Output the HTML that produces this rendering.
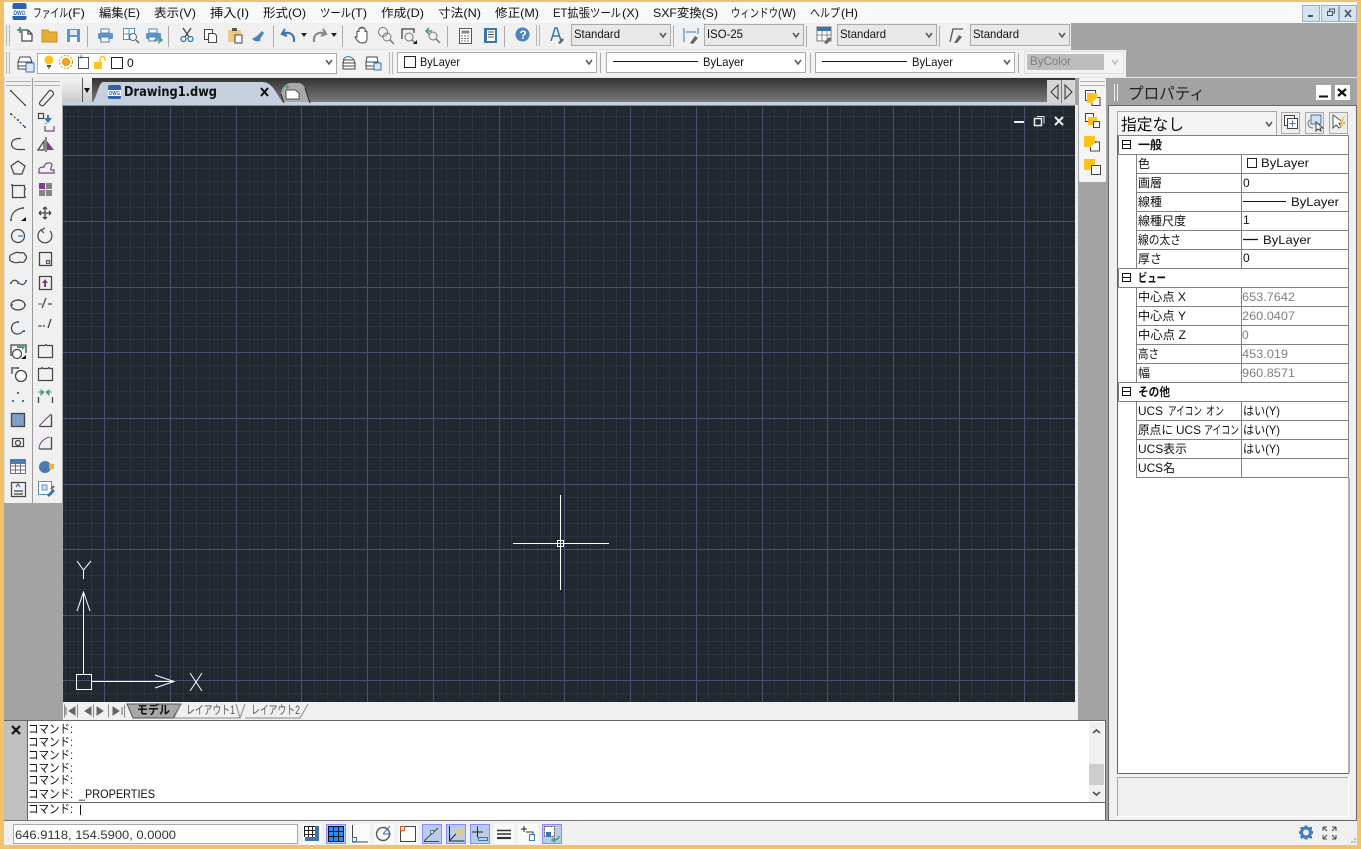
<!DOCTYPE html>
<html><head><meta charset="utf-8"><title>AutoCAD</title>
<style>
html,body{margin:0;padding:0;width:1361px;height:849px;overflow:hidden;background:#a3a3a3}
svg{display:block}
text{font-family:"Liberation Sans","Noto Sans CJK JP",sans-serif;font-size:12px;fill:#111;stroke:none}
.g{fill:#808080}
.b{font-weight:bold}
.i{fill:none;stroke:#444;stroke-width:1.2}
.c{fill:none;stroke:#555;stroke-width:1.5}
</style></head><body>
<svg xmlns="http://www.w3.org/2000/svg" width="1361" height="849" viewBox="0 0 1361 849">
<rect width="1361" height="849" fill="#a3a3a3"/>
<!-- menu bar -->
<rect x="4" y="2" width="1353" height="21" fill="#f6f8fa"/>
<rect x="12.500" y="3" width="14" height="17" rx="2" fill="#2d62ad"/><rect x="12.500" y="9" width="14" height="7" fill="#fff"/>
<text x="13.500" y="15" textLength="12" lengthAdjust="spacingAndGlyphs" style="font-size:6px;fill:#2d62ad;font-weight:bold">DWG</text>
<g>
<text x="33" y="17" textLength="35" lengthAdjust="spacingAndGlyphs">ファイル</text><text x="68" y="17" textLength="17" lengthAdjust="spacingAndGlyphs">(F)</text>
<text x="99" y="17" textLength="41" lengthAdjust="spacingAndGlyphs">編集(E)</text>
<text x="154" y="17" textLength="42" lengthAdjust="spacingAndGlyphs">表示(V)</text>
<text x="210" y="17" textLength="39" lengthAdjust="spacingAndGlyphs">挿入(I)</text>
<text x="263" y="17" textLength="43" lengthAdjust="spacingAndGlyphs">形式(O)</text>
<text x="320" y="17" textLength="31" lengthAdjust="spacingAndGlyphs">ツール</text><text x="351" y="17" textLength="16" lengthAdjust="spacingAndGlyphs">(T)</text>
<text x="381" y="17" textLength="43" lengthAdjust="spacingAndGlyphs">作成(D)</text>
<text x="438" y="17" textLength="43" lengthAdjust="spacingAndGlyphs">寸法(N)</text>
<text x="495" y="17" textLength="44" lengthAdjust="spacingAndGlyphs">修正(M)</text>
<text x="553" y="17" textLength="37" lengthAdjust="spacingAndGlyphs">ET拡張</text><text x="590" y="17" textLength="31" lengthAdjust="spacingAndGlyphs">ツール</text><text x="622" y="17" textLength="17" lengthAdjust="spacingAndGlyphs">(X)</text>
<text x="653" y="17" textLength="65" lengthAdjust="spacingAndGlyphs">SXF変換(S)</text>
<text x="731" y="17" textLength="47" lengthAdjust="spacingAndGlyphs">ウィンドウ</text><text x="778" y="17" textLength="18" lengthAdjust="spacingAndGlyphs">(W)</text>
<text x="810" y="17" textLength="30" lengthAdjust="spacingAndGlyphs">ヘルプ</text><text x="841" y="17" textLength="17" lengthAdjust="spacingAndGlyphs">(H)</text>
</g>
<g fill="#d5e3f0" stroke="#9ab0c4">
<rect x="1302.5" y="5.5" width="17" height="16"/><rect x="1321.5" y="5.5" width="17" height="16"/><rect x="1339.5" y="5.5" width="17" height="16"/>
</g>
<path d="M1308 16h5" stroke="#456" stroke-width="2"/>
<path d="M1327.5 11.5h5v4h-5zM1329.5 11v-2h5v4h-2" fill="none" stroke="#456"/>
<path d="M1345 10l6 7M1351 10l-6 7" stroke="#456" stroke-width="1.6"/>

<!-- toolbars -->
<rect x="4" y="23" width="1067" height="26" fill="#f0f0f0"/>
<rect x="4" y="50" width="1122" height="27" fill="#f2f2f2"/>
<rect x="4" y="49" width="1067" height="1" fill="#e2e2e2"/>
<rect x="4" y="77" width="1353" height="1" fill="#e8e8e8"/>
<path d="M6.5 25v21M9.5 25v21M6.5 52v22M9.5 52v22M536.5 25v21M539.5 25v21M389.5 52v22M392.5 52v22" stroke="#b5b5b5"/>
<path d="M87.5 26v21M168.5 26v21M273.5 26v21M342.5 26v21M447.5 26v21M504.5 26v21M673.5 26v21M806.5 26v21M939.5 26v21M600.5 53v20M810.5 53v20M1018.5 53v20" stroke="#aaa"/>

<!-- row 1 icons -->
<g class="i">
<path d="M22 30h6l4 4v7H22zM28 30v4h4" stroke-width="1.2" fill="#fff"/>
<path d="M20 27v6M17 30h6" stroke="#4f9a7f" stroke-width="2"/>
</g>
<path d="M42 30h6l1 2h8v10H42z" fill="#e6ac3a" stroke="#c98f20"/>
<rect x="67" y="29" width="13" height="13" fill="#5b93cc"/><rect x="70" y="30" width="7" height="5" fill="#dfe9f3"/><rect x="70" y="37" width="7" height="5" fill="#fff"/>
<g><rect x="101" y="29" width="8" height="4" fill="#fff" stroke="#4a82bd"/><rect x="98" y="33" width="15" height="6" rx="1" fill="#5b93cc"/><rect x="101" y="37" width="8" height="5" fill="#fff" stroke="#4a82bd"/></g>
<g fill="none" stroke="#5a90c8"><rect x="123.5" y="28.5" width="11" height="11" fill="#fff"/><path d="M129 28v11M123 34h11"/><circle cx="133" cy="37" r="3.5" stroke="#666" fill="#fff"/><path d="M136 40l3 3" stroke="#666" stroke-width="1.5"/></g>
<g><rect x="149" y="29" width="8" height="4" fill="#fff" stroke="#4a82bd"/><rect x="146" y="33" width="15" height="6" rx="1" fill="#5b93cc"/><rect x="149" y="37" width="7" height="4" fill="#fff" stroke="#4a82bd"/><path d="M154 40h7M158 37l4 3-4 3" fill="none" stroke="#4f9a7f" stroke-width="1.6"/></g>
<g fill="none" stroke="#444" stroke-width="1.3"><path d="M183 28l6 9M191 28l-6 9"/><circle cx="183.500" cy="39" r="2.500" stroke="#3a75b0"/><circle cx="190.500" cy="39" r="2.500" stroke="#3a75b0"/></g>
<g stroke="#444" fill="#fff"><rect x="204.500" y="29.500" width="8" height="10"/><path d="M208.500 33.500h6l2 2v7h-8z"/></g>
<g><rect x="228" y="30" width="13" height="12" fill="#eec883"/><rect x="232" y="28" width="5" height="3" fill="#555"/><rect x="235" y="35" width="7" height="8" fill="#fff" stroke="#444"/></g>
<path d="M252 39l5-3 4 4c-2 2-6 2-9-1zM257 36l5-5 2 2-4 6" fill="#4a82bd"/>
<path d="M285 29l-3 5 5 2M283 34c6-3 12 0 11 8" fill="none" stroke="#3a75b0" stroke-width="2.200"/>
<path d="M301 33h6l-3 4zM331 33h6l-3 4z" fill="#222"/>
<path d="M323 29l3 5-5 2M325 34c-6-3-12 0-11 8" fill="none" stroke="#8a8a8a" stroke-width="2.200"/>
<path d="M357 37v-5a1 1 0 0 1 2 0v-3a1 1 0 0 1 2 0v-1a1 1 0 0 1 2 0v1a1 1 0 0 1 2 0v3a1 1 0 0 1 2 0v7c0 3-2 4-5 4-4 0-5-3-7-6z" fill="#fff" stroke="#444"/>
<g fill="none" stroke="#777"><circle cx="383" cy="32" r="4.500"/><circle cx="387" cy="37" r="4" /><path d="M390 40l4 4" stroke-width="1.500"/></g>
<g fill="none"><path d="M402 39v-10h12v4" stroke="#444" stroke-width="1.300"/><circle cx="409" cy="37" r="4" stroke="#777"/><path d="M412 40l3 3" stroke="#777" stroke-width="1.500"/><path d="M413 44l4-4v4z" fill="#111"/></g>
<g fill="none"><path d="M426 31h6M429 28l-3 3 3 3" stroke="#4f9a7f" stroke-width="1.600"/><circle cx="433" cy="36" r="4" stroke="#777"/><path d="M436 39l4 4" stroke="#777" stroke-width="1.500"/></g>
<rect x="459.500" y="28.500" width="12" height="15" fill="#fff" stroke="#555"/><rect x="461.500" y="30.500" width="8" height="3" fill="#888"/><path d="M461 36h9M461 38.500h9M461 41h9" stroke="#777" stroke-dasharray="2 1"/>
<rect x="484" y="28" width="13" height="15" fill="#3a75b0"/><rect x="487" y="30" width="8" height="11" fill="#fff"/><path d="M488 32h6M488 34.500h6M488 37h6" stroke="#555"/>
<circle cx="522.500" cy="34.500" r="7" fill="#4a82bd"/><text x="519.500" y="39" class="b" style="fill:#fff">?</text>
<!-- row 1 combos -->
<g fill="#e8e8e8" stroke="#aaa">
<rect x="571.500" y="24.500" width="99" height="21"/><rect x="704.500" y="24.500" width="99" height="21"/><rect x="837.500" y="24.500" width="99" height="21"/><rect x="970.500" y="24.500" width="99" height="21"/>
</g>
<text x="574" y="38" textLength="46" lengthAdjust="spacingAndGlyphs">Standard</text>
<text x="707" y="38" textLength="36" lengthAdjust="spacingAndGlyphs">ISO-25</text>
<text x="840" y="38" textLength="46" lengthAdjust="spacingAndGlyphs">Standard</text>
<text x="973" y="38" textLength="46" lengthAdjust="spacingAndGlyphs">Standard</text>
<path class="c" d="M660 33l3 4 3-4M793 33l3 4 3-4M926 33l3 4 3-4M1059 33l3 4 3-4"/>
<path d="M551 41l4-13h2l4 13M553 36h6" fill="none" stroke="#3a75b0" stroke-width="1.500"/><path d="M558 43l4-5 2 2-4 4z" fill="#666"/>
<path d="M684 28v14M698 28v6M686 32h10" fill="none" stroke="#3a75b0"/><path d="M690 43l5-7 3 2-5 6z" fill="#666"/>
<rect x="817" y="27" width="14" height="14" fill="#fff" stroke="#777"/><rect x="817" y="27" width="14" height="4" fill="#3a75b0"/><path d="M817 35h14M822 31v10M827 31v10" stroke="#888"/><path d="M824 43l5-6 2 2-4 5z" fill="#666"/>
<path d="M950 42l3-13h10" fill="none" stroke="#555" stroke-width="1.300"/><path d="M954 43l5-8 3 2-5 6z" fill="#666"/>

<!-- row 2 icons -->
<g fill="#fff" stroke="#444"><path d="M18 62l2-5h10l2 5zM18 62h13v4H18zM18 66h13v3H18z"/></g><rect x="26" y="63" width="8" height="9" fill="#dfe9f3" stroke="#3a75b0"/>
<rect x="37.500" y="53.500" width="299" height="20" fill="#fff" stroke="#aaa"/>
<circle cx="49" cy="60" r="4.500" fill="#fdc31a"/><path d="M47 65h4v2h-4z" fill="#555"/><path d="M48 68h2" stroke="#333"/>
<circle cx="66" cy="62" r="3.500" fill="#f5a623" stroke="#f08a00"/><circle cx="66" cy="62" r="6.500" fill="none" stroke="#f08a00" stroke-dasharray="2 1.500"/>
<rect x="78.500" y="57.500" width="10" height="11" fill="#fff" stroke="#555"/><path d="M81 54v5M78 56h6" stroke="#888" stroke-dasharray="1 1"/>
<rect x="94" y="62" width="8" height="7" fill="#fdc31a"/><path d="M100 62v-3a2.500 2.500 0 0 1 5 0v2" fill="none" stroke="#fdc31a" stroke-width="1.500"/>
<rect x="111.500" y="57.500" width="11" height="11" fill="#fff" stroke="#222"/>
<text x="127" y="67" style="font-size:12px">0</text>
<path class="c" d="M326 60l3 4 3-4"/>
<g fill="#fff" stroke="#444"><path d="M343 63h12l-1-3H344zM343 63h12v3H343zM343 66h12v3H343z"/></g><path d="M343 60c2-4 8-5 11 0" fill="none" stroke="#3a75b0"/>
<g fill="#fff" stroke="#444"><path d="M366 62l1-5h10l1 5zM366 62h12v4H366zM366 66h12v3H366z"/></g><rect x="374" y="63" width="7" height="7" fill="#dfe9f3" stroke="#3a75b0"/>
<g fill="#fff" stroke="#aaa">
<rect x="397.500" y="52.500" width="199" height="20"/><rect x="606.500" y="52.500" width="199" height="20"/><rect x="815.500" y="52.500" width="199" height="20"/>
</g>
<rect x="404.500" y="56.500" width="11" height="11" fill="#fff" stroke="#222"/>
<text x="420" y="66" textLength="40" lengthAdjust="spacingAndGlyphs">ByLayer</text>
<path d="M613 61.500h85M822 61.500h85" stroke="#111"/>
<text x="703" y="66" textLength="41" lengthAdjust="spacingAndGlyphs">ByLayer</text>
<text x="912" y="66" textLength="41" lengthAdjust="spacingAndGlyphs">ByLayer</text>
<path class="c" d="M586 60l3 4 3-4M795 60l3 4 3-4M1004 60l3 4 3-4"/>
<rect x="1024.500" y="51.500" width="99" height="22" fill="#f4f4f4" stroke="#ddd"/>
<rect x="1027" y="54" width="77" height="16" fill="#bdbdbd"/>
<text x="1030" y="65" textLength="41" lengthAdjust="spacingAndGlyphs" style="fill:#7d7d7d">ByColor</text>
<path d="M1112 60l3 4 3-4" fill="none" stroke="#bbb" stroke-width="1.500"/>

<!-- left tool columns -->
<rect x="5" y="78" width="27" height="425" fill="#f0f0f0"/>
<rect x="33" y="78" width="29" height="425" fill="#f0f0f0"/>
<rect x="32" y="78" width="1" height="425" fill="#9a9a9a"/>
<rect x="4" y="78" width="1" height="425" fill="#ddd"/>
<path d="M6 81.500h25M6 85.500h25M34 81.500h26M34 85.500h26" stroke="#b0b0b0"/>
<rect x="4" y="503" width="58" height="217" fill="#a3a3a3"/>

<!-- col 1 -->
<g fill="none" stroke="#444" stroke-width="1.200">
<path d="M11 91l14 14"/><path d="M11 114l14 13" stroke="#444" stroke-dasharray="2 2"/>
<path d="M25 149.500h-6c-10 0-10-11 0-11h2" stroke-dasharray="none"/>
<path d="M18 161l7 5-3 8h-8l-3-8z"/>
<path d="M12.500 185.500h12v12h-12z"/>
<path d="M11 220c0-7 5-11 12-12"/>
<circle cx="18" cy="236" r="6.500"/><path d="M18 236h5" stroke="#3a75b0"/>
<path d="M13 254c2-2 5-2 7-1 3-1 5 0 5 2 2 1 2 4 0 5 0 2-3 3-5 2-3 1-5 1-7 0-3-1-4-2-3-4-1-2 1-4 3-4z"/>
<path d="M11 283c3-5 6-2 8 0s5 3 7-2"/>
<ellipse cx="18" cy="305" rx="7" ry="5"/>
<path d="M18 322c-8 0-9 11-1 12 3 0 5-1 6-3"/>
<path d="M11 356v-11h15v8" stroke-width="1.300"/><circle cx="17" cy="354" r="4.500" fill="#fff"/>
<path d="M12 374v-6h6" stroke-width="1.300"/><circle cx="21" cy="376" r="5.500" fill="#fff" stroke-width="1.300"/>
<rect x="11.500" y="413.500" width="13" height="13" stroke-width="1.300" fill="#7f9fc6"/>
<rect x="12.500" y="438.500" width="11" height="8"/><circle cx="18" cy="443" r="2.500"/>
<path d="M11.500 482.500h14v14h-14z"/><path d="M14 491h9M14 494h9"/><path d="M16 487l2-3 2 3" stroke="#3a75b0"/>
</g>
<g fill="#3a75b0">
<rect x="10" y="90" width="2" height="2"/><rect x="24" y="104" width="2" height="2"/>
<rect x="10" y="113" width="2" height="2"/><rect x="17" y="119" width="2" height="2"/><rect x="24" y="126" width="2" height="2"/>
<rect x="24" y="188" width="2" height="2"/><rect x="11" y="184" width="2" height="2"/><rect x="24" y="196" width="2" height="2"/>
<rect x="22" y="207" width="2" height="2"/><rect x="10" y="219" width="2" height="2"/>
<rect x="10" y="282" width="2" height="2"/><rect x="17" y="282" width="2" height="2"/><rect x="25" y="280" width="2" height="2"/>
<rect x="11" y="304" width="2" height="2"/><rect x="17" y="299" width="2" height="2"/><rect x="24" y="304" width="2" height="2"/>
<rect x="17" y="321" width="2" height="2"/><rect x="23" y="330" width="2" height="2"/>
<rect x="11" y="367" width="2" height="2"/><rect x="17" y="367" width="2" height="2"/>
<rect x="17" y="392" width="2" height="2"/><rect x="12" y="400" width="2" height="2"/><rect x="22" y="400" width="2" height="2"/>
<path d="M17 346h5v-2l3 3-3 3v-2h-5z" fill="#4f9a7f"/>
</g>
<path d="M21 221l5-4v4zM21 359l5-4v4z" fill="#111"/>
<path d="M10.500 459.500h15v14h-15zM10 466h16M10 470h16M15.500 459v14M20.500 459v14" fill="#fff" stroke="#7b6a85"/>
<rect x="10" y="459" width="16" height="5" fill="#4a7bb0"/>

<!-- col 2 -->
<g fill="none" stroke="#444" stroke-width="1.200">
<path d="M40 102l9-11c2-2 6 2 4 4l-9 10c-2 2-6-1-4-3z"/>
<path d="M46 124v-1M46 131h-1v-5M46 131h8v-5" stroke="#7b3f87"/>
<rect x="38.500" y="113.500" width="5" height="5"/>
<path d="M46 137v15M38 150l6-9v9z"/>
<path d="M39 170c0-3 3-3 5-3 0-4 7-6 8-2 0 2-2 3-1 5h3v3H39z" stroke="#7b3f87"/>
<path d="M45 207v12M39 213h12M45 207l-2 2M45 207l2 2M45 219l-2-2M45 219l2-2M39 213l2-2M39 213l2 2M51 213l-2-2M51 213l-2 2" stroke-width="1.300"/>
<path d="M41 230a7 7 0 1 0 9 1" stroke-width="1.200"/><path d="M45 228l-4 2 3 3" stroke-width="1.200"/>
<path d="M39.500 252.500h12v13h-12z" stroke-width="1.300"/><rect x="46.500" y="260.500" width="3" height="3" stroke="#7b3f87"/>
<path d="M39.500 276.500h12v13h-12z" stroke-width="1.300"/>
<path d="M42 308l4-10" stroke-width="1.300"/><path d="M48 304h4"/>
<path d="M48 328l3-9" stroke-width="1.300"/><path d="M38 326h3M43 326h2"/>
<path d="M38.500 345.500h14v12h-14z"/>
<path d="M38.500 368.500h14v12h-14z"/>
<path d="M38.500 403v-6M52.500 403v-6" stroke-width="1.300"/>
<path d="M39.500 426.500h12v-12" stroke-width="1.300"/>
<path d="M51.500 437v12h-12" stroke-width="1.300"/>
</g>
<path d="M49 113v5h3l-4 5-4-5h3v-3h2z" fill="#3a75b0"/><path d="M46 142l7 9h-7z" fill="#7b3f87" transform="translate(1 -1)"/>
<g fill="#7b3f87"><rect x="39" y="183" width="6" height="6"/></g><g fill="#8b7f8c"><rect x="46" y="183" width="6" height="6"/><rect x="39" y="190" width="6" height="6"/><rect x="46" y="190" width="6" height="6"/></g>
<path d="M45 279l3 4h-2v4h-2v-4h-2z" fill="#7b3f87"/>
<path d="M38 304h4" stroke="#7b3f87"/><path d="M38 326h4" stroke="#7b3f87" stroke-dasharray="2 1"/>
<rect x="45" y="344" width="2" height="2" fill="#3a75b0"/><rect x="41" y="367" width="2" height="2" fill="#3a75b0"/><rect x="48" y="367" width="2" height="2" fill="#3a75b0"/>
<path d="M38 392h6M44 392l-3-2v5zM52 392h-6M46 392l3-2v5z" fill="#4f9a7f" stroke="#4f9a7f"/>
<path d="M39 426l12-12M39 449c0-6 5-11 11-12" fill="none" stroke="#7b3f87"/>
<circle cx="45" cy="467" r="6" fill="#4a7bb0"/><rect x="49" y="464" width="5" height="5" fill="#f0b040"/>
<g fill="#fff" stroke="#5a90c8"><rect x="38.500" y="481.500" width="13" height="13"/><rect x="42" y="485" width="5" height="5" fill="#cfe0f0"/></g><path d="M47 495l6-6 2 2-6 6z" fill="#3a75b0"/><path d="M51 489l3-3" stroke="#666" stroke-width="2"/>

<!-- tab bar -->
<defs>
<linearGradient id="tb" x1="0" y1="0" x2="0" y2="1"><stop offset="0" stop-color="#333"/><stop offset="1" stop-color="#7d7d7d"/></linearGradient>
<linearGradient id="bt" x1="0" y1="0" x2="0" y2="1"><stop offset="0" stop-color="#f4f4f4"/><stop offset="1" stop-color="#c9c9c9"/></linearGradient>
</defs>
<rect x="62" y="78" width="1013" height="25" fill="url(#tb)"/>
<rect x="62" y="78" width="30" height="25" fill="url(#bt)"/>
<path d="M82.500 78v25" stroke="#555"/>
<path d="M84 88h6l-3 5z" fill="#111"/>
<path d="M92 103c3-2 5-12 8-18 1-2 2-3 4-3h158c5 0 8 2 12 7l9 14z" fill="#c5d0dc"/>
<rect x="62" y="102" width="1013" height="3" fill="#c5d0dc"/>
<rect x="62" y="105" width="1016" height="1" fill="#8c8c8c"/>
<rect x="108" y="85" width="13" height="14" rx="2" fill="#2d62ad"/><rect x="108" y="90" width="13" height="6" fill="#fff"/>
<text x="109" y="95" textLength="11" lengthAdjust="spacingAndGlyphs" style="font-size:5.500px;fill:#2d62ad;font-weight:bold">DWG</text>
<text x="124" y="96" class="b" textLength="93" lengthAdjust="spacingAndGlyphs" style="font-size:13px;font-family:'DejaVu Sans',sans-serif">Drawing1.dwg</text>
<path d="M261 88l7 8M268 88l-7 8" stroke="#111" stroke-width="2"/>
<path d="M284 102l-3-8c1-6 4-11 10-11h7c4 0 5 2 7 5l5 14z" fill="#a8a8a8"/>
<path d="M281 94l3 9M305 88l5 15" fill="none" stroke="#222"/>
<path d="M286 90h9l4 3v6h-13z" fill="#fff" stroke="#555"/><path d="M287 84v5M284.500 87h5" stroke="#4f9a7f" stroke-width="1.500"/>
<rect x="1047" y="80" width="28" height="23" fill="#d6d6d6"/><path d="M1061.500 80v23" stroke="#777"/>
<path d="M1058 85v14l-7-7zM1065 85v14l7-7z" fill="none" stroke="#333"/>

<!-- drawing area -->
<rect x="62" y="106" width="1" height="596" fill="#a8a8a8"/>
<rect x="63" y="106" width="1012" height="596" fill="#212830"/>
<path stroke="#2d3340" stroke-width="1" fill="none" d="M65.500 107V702M78.500 107V702M91.500 107V702M117.500 107V702M130.500 107V702M144.500 107V702M157.500 107V702M183.500 107V702M196.500 107V702M209.500 107V702M222.500 107V702M249.500 107V702M262.500 107V702M275.500 107V702M288.500 107V702M314.500 107V702M327.500 107V702M340.500 107V702M354.500 107V702M380.500 107V702M393.500 107V702M406.500 107V702M419.500 107V702M446.500 107V702M459.500 107V702M472.500 107V702M485.500 107V702M511.500 107V702M524.500 107V702M537.500 107V702M551.500 107V702M577.500 107V702M590.500 107V702M603.500 107V702M616.500 107V702M643.500 107V702M656.500 107V702M669.500 107V702M682.500 107V702M708.500 107V702M721.500 107V702M735.500 107V702M748.500 107V702M774.500 107V702M787.500 107V702M800.500 107V702M813.500 107V702M840.500 107V702M853.500 107V702M866.500 107V702M879.500 107V702M905.500 107V702M919.500 107V702M932.500 107V702M945.500 107V702M971.500 107V702M984.500 107V702M997.500 107V702M1011.500 107V702M1037.500 107V702M1050.500 107V702M1063.500 107V702"/>
<path stroke="#2d3340" stroke-width="1" fill="none" d="M63 116.500H1075M63 129.500H1075M63 142.500H1075M63 168.500H1075M63 181.500H1075M63 194.500H1075M63 207.500H1075M63 234.500H1075M63 247.500H1075M63 260.500H1075M63 273.500H1075M63 300.500H1075M63 313.500H1075M63 326.500H1075M63 339.500H1075M63 365.500H1075M63 378.500H1075M63 391.500H1075M63 405.500H1075M63 431.500H1075M63 444.500H1075M63 457.500H1075M63 470.500H1075M63 497.500H1075M63 510.500H1075M63 523.500H1075M63 536.500H1075M63 562.500H1075M63 575.500H1075M63 589.500H1075M63 602.500H1075M63 628.500H1075M63 641.500H1075M63 654.500H1075M63 667.500H1075M63 693.500H1075"/>
<path stroke="#4b4f6f" stroke-width="1" fill="none" d="M104.500 107V702M170.500 107V702M236.500 107V702M301.500 107V702M367.500 107V702M433.500 107V702M499.500 107V702M564.500 107V702M630.500 107V702M696.500 107V702M762.500 107V702M827.500 107V702M893.500 107V702M959.500 107V702M1024.500 107V702M63 155.500H1075M63 221.500H1075M63 287.500H1075M63 352.500H1075M63 418.500H1075M63 484.500H1075M63 549.500H1075M63 615.500H1075M63 680.500H1075"/>
<!-- viewport controls -->
<path d="M1014 122h10" stroke="#eee" stroke-width="2"/>
<path d="M1034.500 118.500h7v7h-7z" fill="#212830" stroke="#eee" stroke-width="1.500"/><path d="M1037 116.500h7v7" fill="none" stroke="#ddd"/>
<path d="M1055 117l8 8M1063 117l-8 8" stroke="#eee" stroke-width="2"/>
<!-- crosshair -->
<path d="M513 543.500h96M560.500 495v95" stroke="#fff"/>
<rect x="557.500" y="540.500" width="6" height="6" fill="none" stroke="#fff"/>
<!-- UCS -->
<g fill="none" stroke="#fff" stroke-width="1">
<path d="M83.500 674V593M77 611l6.500-19 6.500 19"/>
<path d="M77 561l6.500 9 7.500-9M83.500 570v9"/>
<rect x="76.500" y="674.500" width="15" height="15"/>
<path d="M92 681.500h82M155 675l19 6.500-19 6.500"/>
<path d="M190 673l12 18M202 673l-12 18"/>
</g>

<!-- layout tabs -->
<rect x="63" y="702" width="1015" height="18" fill="#f0f0f0"/>
<rect x="1075" y="105" width="3" height="597" fill="#ececec"/>
<g stroke="#888" fill="#e6e6e6"><path d="M64.500 704.500v13M77.500 704.500v13M93.500 704.500v13M108.500 704.500v13M124.500 704.500v13" fill="none"/></g>
<path d="M66 707v8M75 707l-6 4 6 4zM91 707l-6 4 6 4zM97 707l6 4-6 4zM113 707l6 4-6 4zM122 707v8" fill="#666" stroke="#666"/>
<path d="M127 704h54l-8 14h-40z" fill="#a8a8a8" stroke="#555"/>
<text x="137" y="714" class="b" textLength="33" lengthAdjust="spacingAndGlyphs">モデル</text>
<path d="M181 704l-7 14h66l-4-14M240 718l5-14M245 718h55l8-14" fill="none" stroke="#888"/>
<text x="186" y="714" textLength="49" lengthAdjust="spacingAndGlyphs" style="fill:#555">レイアウト1</text>
<text x="251" y="714" textLength="49" lengthAdjust="spacingAndGlyphs" style="fill:#555">レイアウト2</text>

<!-- command area -->
<rect x="4" y="720" width="1102" height="101" fill="#fff"/>
<rect x="4" y="721" width="23" height="100" fill="#c0c0c0"/>
<path d="M12 726l8 8M20 726l-8 8" stroke="#111" stroke-width="2.200"/>
<rect x="1089" y="722" width="15" height="80" fill="#f0f0f0"/>
<rect x="1089" y="764" width="15" height="21" fill="#cdcdcd"/>
<path d="M1093 733l3.500-3 3.500 3M1093 792l3.500 3 3.500-3" fill="none" stroke="#555" stroke-width="1.800"/>
<path d="M4 720.500H1105.500V820.500H4M27.500 721V820M28 802.500H1105" fill="none" stroke="#666"/>
<g style="font-size:12px">
<text x="28" y="733" textLength="45" lengthAdjust="spacingAndGlyphs">コマンド:</text>
<text x="28" y="746" textLength="45" lengthAdjust="spacingAndGlyphs">コマンド:</text>
<text x="28" y="759" textLength="45" lengthAdjust="spacingAndGlyphs">コマンド:</text>
<text x="28" y="772" textLength="45" lengthAdjust="spacingAndGlyphs">コマンド:</text>
<text x="28" y="784" textLength="45" lengthAdjust="spacingAndGlyphs">コマンド:</text>
<text x="28" y="798" textLength="45" lengthAdjust="spacingAndGlyphs">コマンド:</text>
<text x="79" y="798" textLength="76" lengthAdjust="spacingAndGlyphs">_PROPERTIES</text>
<text x="28" y="813" textLength="45" lengthAdjust="spacingAndGlyphs">コマンド:</text>
</g>
<path d="M80.500 805v10" stroke="#111"/>

<!-- right narrow toolbar -->
<rect x="1079" y="78" width="27" height="104" rx="2" fill="#f4f4f4"/>
<path d="M1080 81.500h25M1080 85.500h25" stroke="#b0b0b0"/>
<g>
<rect x="1085.500" y="90.500" width="10" height="10" fill="#fff" stroke="#444"/><rect x="1087" y="93" width="10" height="10" fill="#fdc31a"/><path d="M1097.500 97.500h2.500v8h-8v-2.500" fill="#fff" stroke="#444"/>
<rect x="1085.500" y="113.500" width="8" height="8" fill="#fff" stroke="#444"/><rect x="1088" y="117" width="9" height="8" fill="#fdc31a"/><rect x="1093.500" y="121.500" width="6" height="6" fill="#fff" stroke="#444"/>
<rect x="1084" y="136" width="11" height="11" fill="#fdc31a"/><path d="M1095.500 143v-1h4v9h-9v-4" fill="#fff" stroke="#444"/>
<rect x="1084" y="159" width="11" height="11" fill="#fdc31a"/><rect x="1091.500" y="165.500" width="9" height="9" fill="#fff" stroke="#444"/>
</g>

<!-- properties palette -->
<rect x="1108.500" y="105.500" width="248" height="715" fill="#f0f0f0" stroke="#666"/>
<path d="M1108 105V86c0-3 2-5 5-5h239c3 0 5 2 5 5v19z" fill="#a3a3a3"/>
<path d="M1114.500 84v17M1117.500 84v17" stroke="#f0f0f0"/>
<text x="1128" y="99" textLength="77" lengthAdjust="spacingAndGlyphs" style="font-size:16px;fill:#222">プロパティ</text>
<rect x="1316" y="85" width="15" height="15" fill="#fff"/><path d="M1319 96.500h9" stroke="#111" stroke-width="2"/>
<rect x="1335" y="85" width="15" height="15" fill="#fff"/><path d="M1338 89l8 7M1346 89l-8 7" stroke="#111" stroke-width="2.200"/>
<rect x="1117.500" y="111.500" width="159" height="24" fill="#f4f4f4" stroke="#a8a8a8"/>
<text x="1121" y="130" textLength="63" lengthAdjust="spacingAndGlyphs" style="font-size:16px">指定なし</text>
<path class="c" d="M1266 122l3 4 3-4"/>
<g fill="#eee" stroke="#aaa"><rect x="1281.500" y="112.500" width="18" height="21"/><rect x="1305.500" y="112.500" width="18" height="21"/><rect x="1329.500" y="112.500" width="18" height="21"/></g>
<g fill="#fff" stroke="#444"><rect x="1284.500" y="115.500" width="10" height="10"/><rect x="1287.500" y="118.500" width="10" height="10"/></g><path d="M1292.500 120.500v6M1289.500 123.500h6" stroke="#3a75b0"/>
<rect x="1311" y="115" width="10" height="9" fill="#cfe0f0" stroke="#3a75b0"/><path d="M1310 120c-3 1-3 8 3 8" fill="none" stroke="#777"/><path d="M1316 122l0 9 2-2 3 2-1-3h3z" fill="#fff" stroke="#444"/>
<path d="M1333 115l0 13 3-3 3 3 2-1-2-4h5z" fill="#fff" stroke="#555"/><path d="M1344 116l-5 7h3l-3 6 7-8h-3l2-5z" fill="#f5c66a"/>

<!-- table -->
<rect x="1118" y="135" width="231" height="638" fill="#fff"/>
<path fill="none" stroke="#808080" d="M1118.500 135.500H1348.500V477.500H1136.500M1118.500 135.500V154.500M1118.500 154.500H1348.500M1136.500 173.500H1348.500M1136.500 192.500H1348.500M1136.500 211.500H1348.500M1136.500 230.500H1348.500M1136.500 249.500H1348.500M1118.500 268.500H1348.500M1118.500 287.500H1348.500M1136.500 306.500H1348.500M1136.500 325.500H1348.500M1136.500 344.500H1348.500M1136.500 363.500H1348.500M1118.500 382.500H1348.500M1118.500 401.500H1348.500M1136.500 420.500H1348.500M1136.500 439.500H1348.500M1136.500 458.500H1348.500M1118.500 268.500V287.500M1118.500 382.500V401.500M1136.500 154.500V268.500M1136.500 287.500V382.500M1136.500 401.500V477.500M1241.500 154.500V268.500M1241.500 287.500V382.500M1241.500 401.500V477.500"/>
<path fill="none" stroke="#111" d="M1122.500 140.500h8v8h-8zM1122.500 144.500h8M1122.500 273.500h8v8h-8zM1122.500 277.500h8M1122.500 387.500h8v8h-8zM1122.500 391.500h8"/>
<text x="1138" y="149" class="b" textLength="24" lengthAdjust="spacingAndGlyphs">一般</text>
<text x="1138" y="282" class="b" textLength="28" lengthAdjust="spacingAndGlyphs">ビュー</text>
<text x="1138" y="396" class="b" textLength="32" lengthAdjust="spacingAndGlyphs">その他</text>
<text x="1138" y="168" textLength="12" lengthAdjust="spacingAndGlyphs">色</text>
<text x="1138" y="187" textLength="24" lengthAdjust="spacingAndGlyphs">画層</text>
<text x="1138" y="206" textLength="24" lengthAdjust="spacingAndGlyphs">線種</text>
<text x="1138" y="225" textLength="48" lengthAdjust="spacingAndGlyphs">線種尺度</text>
<text x="1138" y="244" textLength="43" lengthAdjust="spacingAndGlyphs">線の太さ</text>
<text x="1138" y="263" textLength="24" lengthAdjust="spacingAndGlyphs">厚さ</text>
<text x="1138" y="301" textLength="48" lengthAdjust="spacingAndGlyphs">中心点 X</text>
<text x="1138" y="320" textLength="48" lengthAdjust="spacingAndGlyphs">中心点 Y</text>
<text x="1138" y="339" textLength="48" lengthAdjust="spacingAndGlyphs">中心点 Z</text>
<text x="1138" y="358" textLength="21" lengthAdjust="spacingAndGlyphs">高さ</text>
<text x="1138" y="377" textLength="12" lengthAdjust="spacingAndGlyphs">幅</text>
<text x="1138" y="415" textLength="25" lengthAdjust="spacingAndGlyphs">UCS</text><text x="1168" y="415" textLength="34" lengthAdjust="spacingAndGlyphs">アイコン</text><text x="1206" y="415" textLength="18" lengthAdjust="spacingAndGlyphs">オン</text>
<text x="1138" y="434" textLength="35" lengthAdjust="spacingAndGlyphs">原点に</text><text x="1176" y="434" textLength="25" lengthAdjust="spacingAndGlyphs">UCS</text><text x="1204" y="434" textLength="35" lengthAdjust="spacingAndGlyphs">アイコン</text>
<text x="1138" y="453" textLength="49" lengthAdjust="spacingAndGlyphs">UCS表示</text>
<text x="1138" y="472" textLength="37" lengthAdjust="spacingAndGlyphs">UCS名</text>
<rect x="1247.500" y="158.500" width="9" height="9" fill="#fff" stroke="#222"/>
<text x="1261" y="167" textLength="48" lengthAdjust="spacingAndGlyphs">ByLayer</text>
<text x="1243" y="187">0</text>
<path d="M1243 201.500h43" stroke="#111"/><text x="1291" y="206" textLength="48" lengthAdjust="spacingAndGlyphs">ByLayer</text>
<text x="1243" y="224">1</text>
<path d="M1243 239.500h15" stroke="#111" stroke-width="1.300"/><text x="1263" y="244" textLength="48" lengthAdjust="spacingAndGlyphs">ByLayer</text>
<text x="1243" y="262">0</text>
<text x="1242" y="301" class="g" textLength="53" lengthAdjust="spacingAndGlyphs">653.7642</text>
<text x="1242" y="320" class="g" textLength="53" lengthAdjust="spacingAndGlyphs">260.0407</text>
<text x="1242" y="339" class="g">0</text>
<text x="1242" y="358" class="g" textLength="46" lengthAdjust="spacingAndGlyphs">453.019</text>
<text x="1242" y="377" class="g" textLength="53" lengthAdjust="spacingAndGlyphs">960.8571</text>
<text x="1243" y="415" textLength="37" lengthAdjust="spacingAndGlyphs">はい(Y)</text>
<text x="1243" y="434" textLength="37" lengthAdjust="spacingAndGlyphs">はい(Y)</text>
<text x="1243" y="453" textLength="37" lengthAdjust="spacingAndGlyphs">はい(Y)</text>
<path d="M1117.500 135V773.500H1349" fill="none" stroke="#666"/><path d="M1349 478V773" stroke="#666"/>
<path d="M1117.500 816V777.500H1348.500" fill="none" stroke="#a8a8a8"/><path d="M1117.500 816.500H1348.500V777" fill="none" stroke="#fff"/>

<!-- status bar -->
<rect x="4" y="821" width="1353" height="24" fill="#f0f0f0"/>
<path d="M4 820.500H1108" stroke="#777"/>
<rect x="13.500" y="824.500" width="284" height="19" fill="#fff" stroke="#a8a8a8"/>
<text x="15" y="839" textLength="161" lengthAdjust="spacingAndGlyphs" style="fill:#333">646.9118, 154.5900, 0.0000</text>
<g fill="#fafafa"><rect x="302" y="824" width="20" height="20"/><rect x="350" y="824" width="20" height="20"/><rect x="374" y="824" width="20" height="20"/><rect x="398" y="824" width="20" height="20"/><rect x="494" y="824" width="20" height="20"/><rect x="518" y="824" width="20" height="20"/></g>
<g fill="#b9cde8" stroke="#8a8aff"><rect x="326.500" y="824.500" width="19" height="19"/><rect x="422.500" y="824.500" width="19" height="19"/><rect x="446.500" y="824.500" width="19" height="19"/><rect x="470.500" y="824.500" width="19" height="19"/><rect x="542.500" y="824.500" width="19" height="19"/></g>
<rect x="305" y="826" width="14" height="15" fill="#3f74ad"/><rect x="304" y="826" width="11" height="11" fill="#fff"/><path d="M304.500 826v11M308.500 826v11M312.500 826v11M304 826.500h11M304 830.500h11M304 834.500h11" stroke="#222"/>
<rect x="328.500" y="826.500" width="15" height="15" fill="#1e90ff" stroke="#111"/><path d="M333.500 826v15M338.500 826v15M328 831.500h15M328 836.500h15" stroke="#111"/>
<path d="M352.500 825v17H368" fill="none" stroke="#444"/><rect x="352.500" y="837.500" width="4" height="4" fill="#fff" stroke="#3a75b0"/>
<circle cx="383" cy="834" r="6.500" fill="none" stroke="#555" stroke-width="1.400"/><path d="M383 834l7-8M383 834h8" fill="none" stroke="#3a75b0"/>
<rect x="400.500" y="826.500" width="15" height="15" fill="#fff" stroke="#444"/><rect x="400.500" y="826.500" width="4" height="4" fill="#fff" stroke="#e05030"/>
<path d="M424 841l14-13" stroke="#444"/><path d="M424 841.500h15" stroke="#444"/><rect x="430.500" y="830.500" width="3" height="3" fill="#fff" stroke="#3a75b0"/>
<path d="M449.500 826v15h15M449 841l7-7" fill="none" stroke="#222"/><path d="M460 827l-4 7h3l-2 5 6-7h-3l2-5z" fill="#f5c66a"/>
<path d="M472 832h11M477.500 826.500v11" stroke="#222"/><rect x="478.500" y="837.500" width="9" height="3" fill="none" stroke="#3a75b0"/>
<path d="M497 830.500h14M497 834h14" stroke="#333" stroke-width="1.500"/><path d="M497 838h14" stroke="#333" stroke-width="2.200"/>
<path d="M521 829h6M524 826v6" stroke="#222"/><path d="M526 832h7v2" fill="none" stroke="#333"/><rect x="529.500" y="834.500" width="5" height="6" fill="#fff" stroke="#3a75b0"/>
<rect x="544.500" y="826.500" width="10" height="10" fill="#fff" stroke="#555" stroke-dasharray="2 1"/><rect x="546" y="832" width="5" height="5" fill="#3a75b0"/><path d="M559 836c0 3-3 4-6 4M555 838l-3 2 3 2" fill="none" stroke="#4f9a7f" stroke-width="1.600"/>
<circle cx="1306" cy="832.500" r="4.500" fill="none" stroke="#3f7fbf" stroke-width="3"/>
<path d="M1306 825.500v14M1299 832.500h14M1301 827.500l10 10M1311 827.500l-10 10" stroke="#3f7fbf" stroke-width="2" stroke-dasharray="2 10"/>
<g fill="#3f7fbf"><rect x="1304.500" y="825.500" width="3" height="2.500"/><rect x="1304.500" y="837" width="3" height="2.500"/><rect x="1299.500" y="831" width="2.500" height="3"/><rect x="1310.500" y="831" width="2.500" height="3"/><rect x="1300.500" y="827" width="2.500" height="2.500"/><rect x="1309.500" y="827" width="2.500" height="2.500"/><rect x="1300.500" y="836" width="2.500" height="2.500"/><rect x="1309.500" y="836" width="2.500" height="2.500"/></g>
<path d="M1323 827h4M1323 827v4M1323 827l4 4M1336 827h-4M1336 827v4M1336 827l-4 4M1323 839h4M1323 839v-4M1323 839l4-4M1336 839h-4M1336 839v-4M1336 839l-4-4" stroke="#444" fill="none"/>
<path d="M1351 842h2M1354 842h2M1354 839h2" stroke="#bbb" stroke-width="2"/>

<!-- window frame -->
<rect x="0" y="0" width="1361" height="2" fill="#efc36b"/>
<rect x="0" y="845" width="1361" height="4" fill="#efc36b"/>
<rect x="0" y="0" width="4" height="849" fill="#efc36b"/>
<rect x="1357" y="0" width="4" height="849" fill="#efc36b"/>
</svg>
</body></html>
